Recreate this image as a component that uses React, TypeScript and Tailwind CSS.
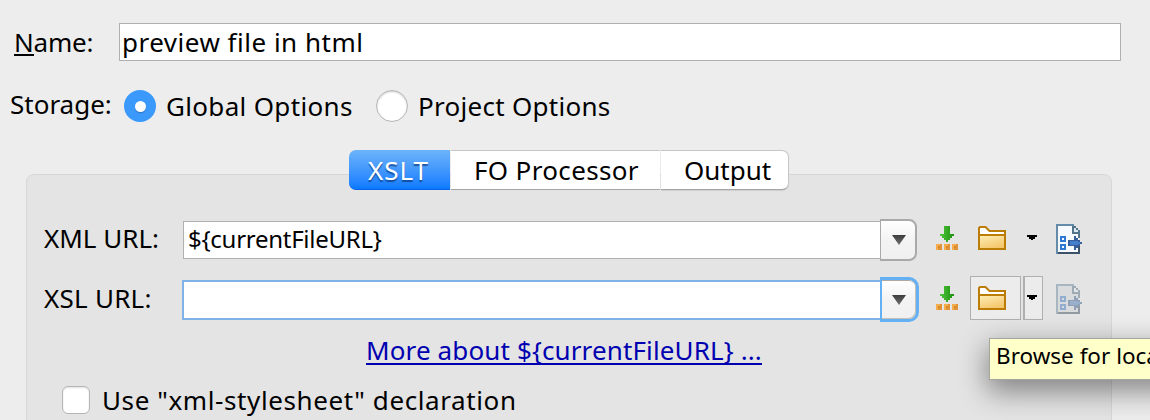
import type { ReactNode } from "react";

function DownloadIcon() {
  return (
    <svg width="22" height="24" viewBox="0 0 22 24" shapeRendering="crispEdges">
      <defs>
        <linearGradient id="green" x1="0" x2="1" y1="0" y2="0">
          <stop offset="0" stopColor="#4fc53c" />
          <stop offset="1" stopColor="#1f8f12" />
        </linearGradient>
      </defs>
      <path d="M8 0h6v8h4v2h-2v2h-2v2h-2v2h-2v-2H8v-2H6v-2H4V8h4z" fill="url(#green)" />
      {[0, 8, 16].map((x) => (
        <g key={x}>
          <rect x={x} y="18" width="6" height="6" fill="#f5ad4b" />
          <path d={`M${x + 4} 18h2v6h-4v-2h2z`} fill="#e0943a" />
          <rect x={x + 2} y="20" width="2" height="2" fill="#d8862a" />
        </g>
      ))}
    </svg>
  );
}

function FolderIcon() {
  return (
    <svg width="28" height="24" viewBox="0 0 28 24">
      <defs>
        <linearGradient id="folder" x1="0" x2="0.5" y1="0" y2="1">
          <stop offset="0" stopColor="#fdf0b8" />
          <stop offset="1" stopColor="#f5c66c" />
        </linearGradient>
      </defs>
      <path d="M1 23V2l1-1h5.5l4 4H27v18z" fill="#fff" />
      <rect x="1" y="9" width="26" height="14" fill="url(#folder)" />
      <path d="M1 23V2l1-1h5.5l4 4H27v18zM1 9h26" fill="none" stroke="#bb7d06" strokeWidth="2" />
    </svg>
  );
}

function SmallCaret() {
  return (
    <svg width="10" height="8" viewBox="0 0 10 8" shapeRendering="crispEdges">
      <path d="M0 1h10v2H8v2H6v1H4V5H2V3H0z" fill="#000" />
    </svg>
  );
}

function DocumentIcon({ disabled = false }: { disabled?: boolean }) {
  return (
    <svg
      width="26"
      height="30"
      viewBox="0 0 26 30"
      shapeRendering="crispEdges"
      className={disabled ? "opacity-50 saturate-75" : ""}
    >
      <path d="M1 1h16l6 7v21H1z" fill={disabled ? "#d2d4d6" : "#f6f9fd"} />
      <path d="M0 0h18v2H2v28H0z" fill="#648ba8" />
      <path d="M16 2h2v6h6v2h-8zM18 2h2v2h-2zM20 4h2v2h-2zM22 6h2v8h-2z" fill="#54748c" />
      <path d="M2 28h20v-6h2v8H2z" fill="#3b5268" />
      <path d="M18 4h2v2h2v2h-4z" fill="#dce8f2" />
      <path
        d="M4 12h6v6H4zM6 14v2h2v-2zM4 20h6v6H4zM6 22v2h2v-2z"
        fill="#2d79d4"
        fillRule="evenodd"
      />
      <path d="M12 16h6v-4h2v2h2v2h2v2h2v2h-2v2h-2v2h-2v2h-2v-4h-6z" fill="#345f9c" />
      <path d="M14 17h8v1h2v2h-2v1h-8z" fill="#4480cc" />
    </svg>
  );
}

function DropTriangle() {
  return (
    <svg width="14" height="10" viewBox="0 0 14 10">
      <defs>
        <linearGradient id="tri" x1="0" x2="0" y1="0" y2="1">
          <stop offset="0" stopColor="#3c3c3c" />
          <stop offset="1" stopColor="#707070" />
        </linearGradient>
      </defs>
      <path d="M0 0h14L7 10z" fill="url(#tri)" />
    </svg>
  );
}

function Tab({ children, className }: { children: ReactNode; className: string }) {
  return <div className={`flex h-10 items-center ${className}`}>{children}</div>;
}

export default function App() {
  return (
    <div className="relative h-[420px] w-[1150px] overflow-hidden bg-[#ededed] pt-[23px] font-['Noto_Sans','Open_Sans',sans-serif] text-[26px] leading-[38px] whitespace-nowrap text-black">
      <div className="flex h-[38px]">
        <div className="w-[119px] pl-[14px] tracking-[-0.2px]">
          <span className="inline-block h-[33px] border-b-2 border-black">N</span>ame:
        </div>
        <div className="w-[1002px] border border-[#b0b0b0] bg-white pl-[2px] leading-[36px]">
          <span className="tracking-[0.5px]">preview file in html</span>
        </div>
      </div>

      <div className="mt-[26px] flex h-[38px] items-center pl-[10px]">
        <span className="mt-[-4px] w-[114px]">Storage:</span>
        <span className="flex size-8 items-center justify-center rounded-full bg-[#3b99fc]">
          <span className="size-[11px] rounded-full bg-white shadow-[0_1px_1px_rgba(0,0,0,0.25)]" />
        </span>
        <span className="w-[220px] pl-[10px] tracking-[0.33px]">Global Options</span>
        <span className="size-8 rounded-full border border-[#b5b5b5] bg-white shadow-[inset_0_1px_2px_rgba(0,0,0,0.2)]" />
        <span className="pl-[10px] tracking-[0.28px]">Project Options</span>
      </div>

      <div className="relative z-10 mt-[25px] ml-[349px] flex h-10 w-[440px]">
        <Tab className="w-[101px] rounded-l-[7px] border-b border-[#0a63e8] bg-linear-to-b from-[#6cb3fa] to-[#067aff] pl-[19px] text-white [text-shadow:0_2px_1px_rgba(0,40,100,0.6)]">
          <span className="tracking-[1px]">XSLT</span>
        </Tab>
        <Tab className="ml-px w-[209px] border-t border-b border-t-[#c6c6c6] border-b-[#a5a5a5] bg-white pl-[23px]">
          <span className="tracking-[0.35px]">FO Processor</span>
        </Tab>
        <Tab className="ml-px w-[128px] rounded-r-[7px] border border-l-0 border-[#c6c6c6] border-b-[#a5a5a5] bg-white pl-[23px] shadow-[0_1px_1px_rgba(0,0,0,0.1)]">
          <span>Output</span>
        </Tab>
      </div>

      <div className="mt-[-16px] ml-[26px] h-[260px] w-[1086px] rounded-t-[8px] border border-[#d7d7d7] bg-[#e4e4e4] pt-[43px]">
        <div className="flex h-[44px] items-center pl-[17px]">
          <span className="mt-[-4px] w-[139px]">XML URL:</span>
          <div className="h-[38px] w-[697px] border border-r-0 border-[#b0b0b0] bg-white pl-[4px] text-[24px] leading-[33px]">
            <span className="tracking-[-0.27px]">${"{currentFileURL}"}</span>
          </div>
          <div className="flex h-[42px] w-[37px] items-center justify-center rounded-r-[8px] border-2 border-l border-[#a9a9a9] bg-linear-to-b from-white via-[#f3f3f3] via-50% to-[#f0f0f0] pl-px">
            <DropTriangle />
          </div>
          <div className="mt-[-4px] flex w-[165px] items-center pl-[19px]">
            <DownloadIcon />
            <span className="ml-5">
              <FolderIcon />
            </span>
            <span className="ml-[21px]">
              <SmallCaret />
            </span>
            <span className="mt-[2px] ml-[19px]">
              <DocumentIcon />
            </span>
          </div>
        </div>

        <div className="mt-[16px] flex h-[44px] items-center pl-[17px]">
          <span className="mt-[-4px] w-[138px] tracking-[0.25px]">XSL URL:</span>
          <div className="h-[40px] w-[698px] border-2 border-r-0 border-[#7db3e8] bg-white" />
          <div className="mt-[-1px] flex h-[45px] w-[39px] items-center justify-center rounded-r-[10px] border-[3px] border-l-2 border-[#63b0f5] bg-linear-to-b from-white via-[#f3f3f3] via-50% to-[#f0f0f0] shadow-[inset_0_1px_0_#b0a8a0,inset_-1px_-1px_0_#c8c0b8]">
            <DropTriangle />
          </div>
          <div className="mt-[-4px] flex items-center pl-[17px]">
            <DownloadIcon />
            <span className="ml-3 flex h-[44px] w-[51px] items-center border border-[#b0b0b0] bg-[#ececec] pl-[7px]">
              <FolderIcon />
            </span>
            <span className="ml-[2px] flex h-[44px] w-5 items-center border border-l-2 border-[#b0b0b0] bg-[#ececec] pl-[2px]">
              <SmallCaret />
            </span>
            <span className="mt-[2px] ml-[13px]">
              <DocumentIcon disabled />
            </span>
          </div>
        </div>

        <div className="mt-[9px] flex h-[38px] pl-[339px] text-[#0000b0]">
          <span className="h-[34px] border-b-2 border-[#0000b0] tracking-[0.13px]">
            More about ${"{currentFileURL}"} ...
          </span>
        </div>

        <div className="mt-[14px] flex h-[34px] items-center pl-[35px]">
          <span className="mt-[-1px] size-7 rounded-[6px] border border-[#b5b5b5] bg-white shadow-[inset_0_1px_2px_rgba(0,0,0,0.12)]" />
          <span className="pl-[12px] tracking-[0.6px]">Use "xml-stylesheet" declaration</span>
        </div>
      </div>

      <div className="absolute top-[338px] left-[989px] h-[42px] w-[400px] border border-[#a5a5a0] bg-[#ffffca] pl-[6px] text-[22.5px] leading-[34px] shadow-[0_10px_28px_2px_rgba(0,0,0,0.42)]">
        <span>Browse for local file</span>
      </div>
    </div>
  );
}
